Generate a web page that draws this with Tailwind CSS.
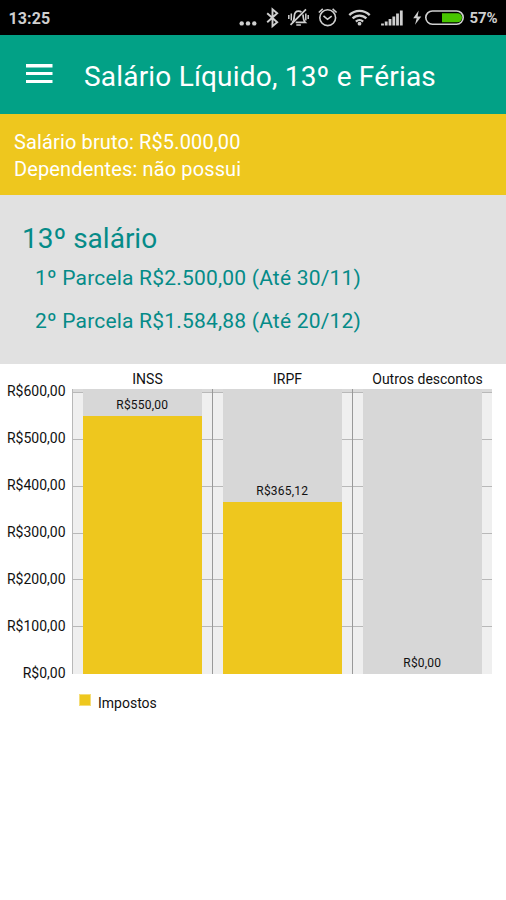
<!DOCTYPE html>
<html lang="pt-BR">

<head>
  <meta charset="utf-8">
  <title>Salário Líquido, 13º e Férias</title>
  <script src="https://cdn.jsdelivr.net/npm/@tailwindcss/browser@4"></script>
</head>

<body class="w-[506px] h-[900px] overflow-hidden bg-white font-[Roboto,sans-serif]">
  <!-- Status bar -->
  <div class="h-[35px] bg-black text-[#cfcfcf] flex items-center pl-[8.500px]">
    <span class="text-[16px] leading-[35px] font-bold pt-px tracking-[0.1px]">13:25</span>
    <svg class="ml-auto shrink-0" width="226" height="35" viewBox="238 0 226 35" fill="none" stroke="#cfcfcf">
      <g fill="#cfcfcf" stroke="none">
        <circle cx="241.7" cy="23.4" r="2.2" />
        <circle cx="248" cy="23.4" r="2.2" />
        <circle cx="254.3" cy="23.4" r="2.2" />
      </g>
      <!-- bluetooth -->
      <path d="M267.200 13.200l10 9-4.700 4V9.300l4.700 4-10 9" stroke-width="1.900" />
      <!-- muted bell -->
      <path d="M292.300 22.300c1.800-1.500 1.900-3.500 2-6.200.2-3.200 1.700-5 4.200-5 1.300 0 2.300.4 3 1.200M303 14.500c.2 4.200.3 6 2.200 7.800h-9.500" stroke-width="1.700" />
      <path d="M306 9.300L290.500 24.800" stroke-width="1.700" />
      <path d="M296.300 25h4.600M291.300 13.500v7M288.800 15v4M305.800 13.500v7M308.200 15v4" stroke-width="1.500" />
      <!-- alarm clock -->
      <circle cx="327.700" cy="17.700" r="7.900" stroke-width="1.600" />
      <path d="M323.500 15.800l4 3.500 4.200-3.200M318.800 12.500l4-3.600M336.600 12.500l-4-3.600" stroke-width="1.600" />
      <!-- wifi -->
      <path d="M349.300 15.100a14.500 14.500 0 0 1 20.400 0M352.600 18.400a9.800 9.800 0 0 1 13.800 0M355.900 21.600a5.200 5.200 0 0 1 7.200 0" stroke-width="2.300" />
      <circle cx="359.500" cy="23.700" r="1.900" fill="#cfcfcf" stroke="none" />
      <!-- signal -->
      <path d="M382.500 25.500v-2M386.200 25.500v-4M390 25.500v-6.500M393.800 25.500v-9M397.500 25.500v-12M401.300 25.500v-15" stroke-width="2.800" />
      <!-- charging battery -->
      <path d="M418.700 10.500l-5.500 7.700h3.500l-1.700 6.500 6.300-8.200h-3.700z" fill="#cfcfcf" stroke="none" />
      <rect x="425.800" y="11" width="37.400" height="13.200" rx="6.600" stroke-width="1.600" />
      <path d="M442 13.200h15.500a4.500 4.500 0 0 1 0 9H442z" fill="#48c600" stroke="none" />
    </svg>
    <span class="w-[42px] pl-[5.500px] text-[15px] leading-[35px] font-bold pt-px tracking-[-0.1px]">57%</span>
  </div>

  <!-- App bar -->
  <header class="h-[79px] bg-[#02a186] flex items-center text-white">
    <svg class="ml-[26px] -mt-[2px]" width="27" height="20" viewBox="0 0 27 20" fill="currentColor">
      <path d="M0 0h26.500v3.500H0zM0 8h26.500v3H0zM0 16h26.500v3H0z" />
    </svg>
    <h1 class="ml-[31px] text-[28px] leading-[34px] tracking-[0.19px] whitespace-nowrap pt-[4px]">Salário Líquido, 13º e Férias</h1>
  </header>

  <!-- Summary -->
  <section class="h-[81px] bg-[#eec71e] pl-[14px] pt-[15px] text-white text-[20px] leading-[27px] tracking-[0.13px]">
    <p>Salário bruto: R$5.000,00</p>
    <p>Dependentes: não possui</p>
  </section>

  <section class="h-[169px] bg-[#e1e1e1] pl-[22px] pt-[26px] text-[#058b88]">
    <h2 class="text-[28px] leading-[36px]">13º salário</h2>
    <div class="pl-[13px] text-[21px] leading-[43px] tracking-[0.2px]">
      <p>1º Parcela R$2.500,00 (Até 30/11)</p>
      <p>2º Parcela R$1.584,88 (Até 20/12)</p>
    </div>
  </section>

  <!-- Taxes chart -->
  <section class="text-[14px] text-[#111]">
    <div class="h-[25px] ml-[77.500px] w-[420px] pt-[6px] grid grid-cols-3 text-center leading-[18px] whitespace-nowrap">
      <span>INSS</span>
      <span>IRPF</span>
      <span>Outros descontos</span>
    </div>
    <div class="flex">
      <div class="w-[66px] -mt-[21px] pr-[0.500px] text-right leading-[47px]">
        <p>R$600,00</p>
        <p>R$500,00</p>
        <p>R$400,00</p>
        <p>R$300,00</p>
        <p>R$200,00</p>
        <p>R$100,00</p>
        <p>R$0,00</p>
      </div>
      <div class="relative ml-[6px] w-[420px] h-[284.5px] bg-[#efefef]">
        <!-- grid lines -->
        <div class="absolute inset-x-0 top-0">
          <div class="h-[3px] bg-[#dadada]"></div>
          <div class="h-[47px] border-t border-[#b8b8b8]"></div>
          <div class="h-[47px] border-t border-[#b8b8b8]"></div>
          <div class="h-[47px] border-t border-[#b8b8b8]"></div>
          <div class="h-[46px] border-t border-[#b8b8b8]"></div>
          <div class="h-[47px] border-t border-[#b8b8b8]"></div>
          <div class="h-[47px] border-t border-[#b8b8b8]"></div>
        </div>
        <!-- bars -->
        <div class="relative h-full grid grid-cols-3 text-[12px] leading-[14px] tracking-[0.2px] text-center">
          <div class="border-l border-[#b8b8b8] pl-[10px] pr-[10.500px]">
            <div class="h-full bg-[#d7d7d7] flex flex-col justify-end">
              <p class="mb-[4px]">R$550,00</p>
              <div class="h-[258px] bg-[#eec71e]"></div>
            </div>
          </div>
          <div class="border-l border-[#999] pl-[10px] pr-[10.500px]">
            <div class="h-full bg-[#d7d7d7] flex flex-col justify-end">
              <p class="mb-[4px]">R$365,12</p>
              <div class="h-[172px] bg-[#eec71e]"></div>
            </div>
          </div>
          <div class="border-l border-[#999] pl-[10px] pr-[10.500px]">
            <div class="h-full bg-[#d7d7d7] flex flex-col justify-end">
              <p class="mb-[4px]">R$0,00</p>
            </div>
          </div>
        </div>
      </div>
    </div>
    <!-- legend -->
    <div class="-mt-[7.500px] pl-[79px] flex items-center">
      <span class="-mt-[3px] size-[12px] bg-[#eec71e] border border-[#f5dd78]"></span>
      <span class="ml-[7px] pt-[3px]">Impostos</span>
    </div>
  </section>
</body>

</html>
